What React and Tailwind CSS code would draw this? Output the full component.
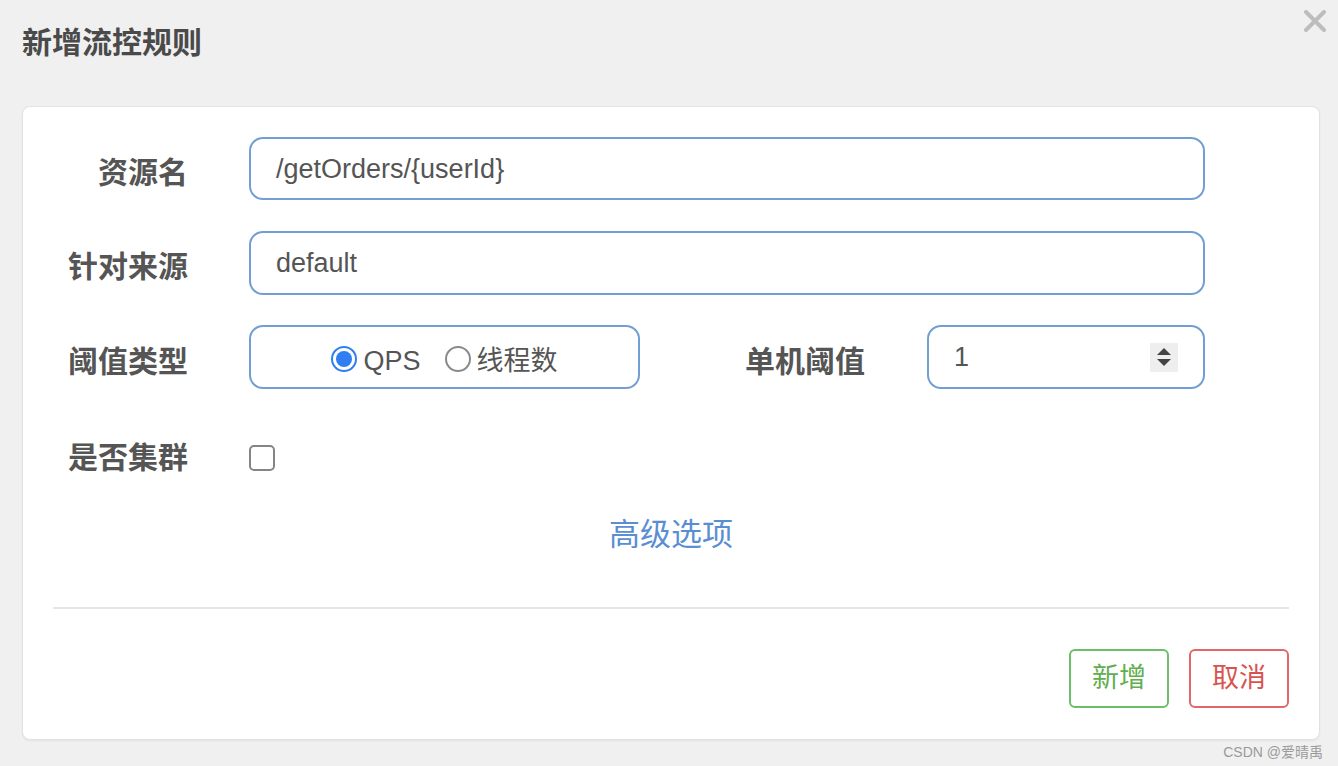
import React from 'react';

const labelCls =
    "shrink-0 text-right text-[30px] font-bold text-[#555555] leading-none";
const inputCls =
    "flex-1 h-full flex items-center rounded-[14px] border-2 border-[#729ed4] pl-[25px] text-[27px] text-[#555555]";

const Radio = ({ checked }) => (
    <span
        className={
            "w-[26px] h-[26px] rounded-full border-2 flex items-center justify-center bg-white " +
            (checked ? "border-[#2f7ff2]" : "border-[#8a8a8a]")
        }
    >
        {checked && <span className="w-[16px] h-[16px] rounded-full bg-[#2f7ff2]" />}
    </span>
);

const App = () => {
    return (
        <div
            className="relative min-h-[766px] w-[1338px] bg-[#f0f0f0] overflow-hidden"
            style={{ fontFamily: '"Liberation Sans", "Noto Sans CJK SC", sans-serif' }}
        >
            {/* Header */}
            <div className="flex justify-between pl-[22px] pr-[12px] h-[106px]">
                <h2 className="mt-[26px] h-[34px] text-[30px] font-bold leading-[34px] text-[#4a4a4a]">
                    新增流控规则
                </h2>
                <svg width="22" height="22" viewBox="0 0 22 22" className="mt-[10px]">
                    <path d="M2 2 L20 20 M20 2 L2 20" stroke="#bdbdbd" strokeWidth="4" strokeLinecap="round" />
                </svg>
            </div>

            {/* Card */}
            <div className="ml-[22px] w-[1298px] h-[634px] bg-white rounded-[8px] border border-[#e2e2e2] shadow-[0_1px_2px_rgba(0,0,0,0.06)] px-[30px] pt-[30px] pb-[31px] flex flex-col">
                {/* 资源名 */}
                <div className="flex items-center h-[63px] pr-[84px]">
                    <div className={labelCls + " w-[135px] pt-[9px]"}>资源名</div>
                    <div className="w-[61px]" />
                    <div className={inputCls + " pt-[2px]"}>/getOrders/{'{'}userId{'}'}</div>
                </div>

                {/* 针对来源 */}
                <div className="flex items-center h-[64px] mt-[31px] pr-[84px]">
                    <div className={labelCls + " w-[135px] pt-[8px]"}>针对来源</div>
                    <div className="w-[61px]" />
                    <div className={inputCls}>default</div>
                </div>

                {/* 阈值类型 / 单机阈值 */}
                <div className="flex items-center h-[64px] mt-[30px] pr-[84px]">
                    <div className={labelCls + " w-[135px] pt-[10px]"}>阈值类型</div>
                    <div className="w-[61px]" />
                    <div className="w-[391px] h-full flex items-center justify-center gap-[6px] pt-[4px] rounded-[14px] border-2 border-[#729ed4] text-[27px] text-[#555555]">
                        <label className="flex items-center gap-[6px]">
                            <Radio checked />
                            <span className="pt-[4px]">QPS</span>
                        </label>
                        <label className="flex items-center gap-[6px] ml-[18px]">
                            <Radio />
                            <span className="pt-[4px]">线程数</span>
                        </label>
                    </div>
                    <div className={labelCls + " w-[225px] pt-[10px]"}>单机阈值</div>
                    <div className="w-[62px]" />
                    <div className={inputCls + " justify-between pr-[25px]"}>
                        <span>1</span>
                        <span className="w-[28px] h-[29px] bg-[#eeeeee] flex flex-col items-center justify-center gap-[4px]">
                            <span className="w-0 h-0 border-l-[7px] border-r-[7px] border-b-[7px] border-l-transparent border-r-transparent border-b-[#444444]" />
                            <span className="w-0 h-0 border-l-[7px] border-r-[7px] border-t-[7px] border-l-transparent border-r-transparent border-t-[#444444]" />
                        </span>
                    </div>
                </div>

                {/* 是否集群 */}
                <div className="flex items-center h-[63px] mt-[37px]">
                    <div className={labelCls + " w-[135px]"}>是否集群</div>
                    <div className="w-[61px]" />
                    <span className="w-[26px] h-[26px] rounded-[5px] border-2 border-[#858585] bg-white" />
                </div>

                {/* 高级选项 */}
                <div className="mt-[25px] h-[40px] flex items-center justify-center text-[31px] text-[#5a8ed2] leading-none">
                    高级选项
                </div>

                {/* Divider */}
                <div className="mt-[53px] border-t-2 border-[#e6e6e6]" />

                {/* Buttons */}
                <div className="mt-[40px] flex justify-end gap-[20px]">
                    <button className="w-[100px] h-[59px] rounded-[6px] border-2 border-[#6cbd6c] text-[27px] text-[#5fae4f] bg-white">
                        新增
                    </button>
                    <button className="w-[100px] h-[59px] rounded-[6px] border-2 border-[#e06868] text-[27px] text-[#d9534f] bg-white">
                        取消
                    </button>
                </div>
            </div>

            {/* Watermark */}
            <div className="absolute right-[15px] bottom-[7px] text-[14px] text-[#9a9a9a] leading-none">
                CSDN @爱晴禹
            </div>
        </div>
    );
};

export default App;
